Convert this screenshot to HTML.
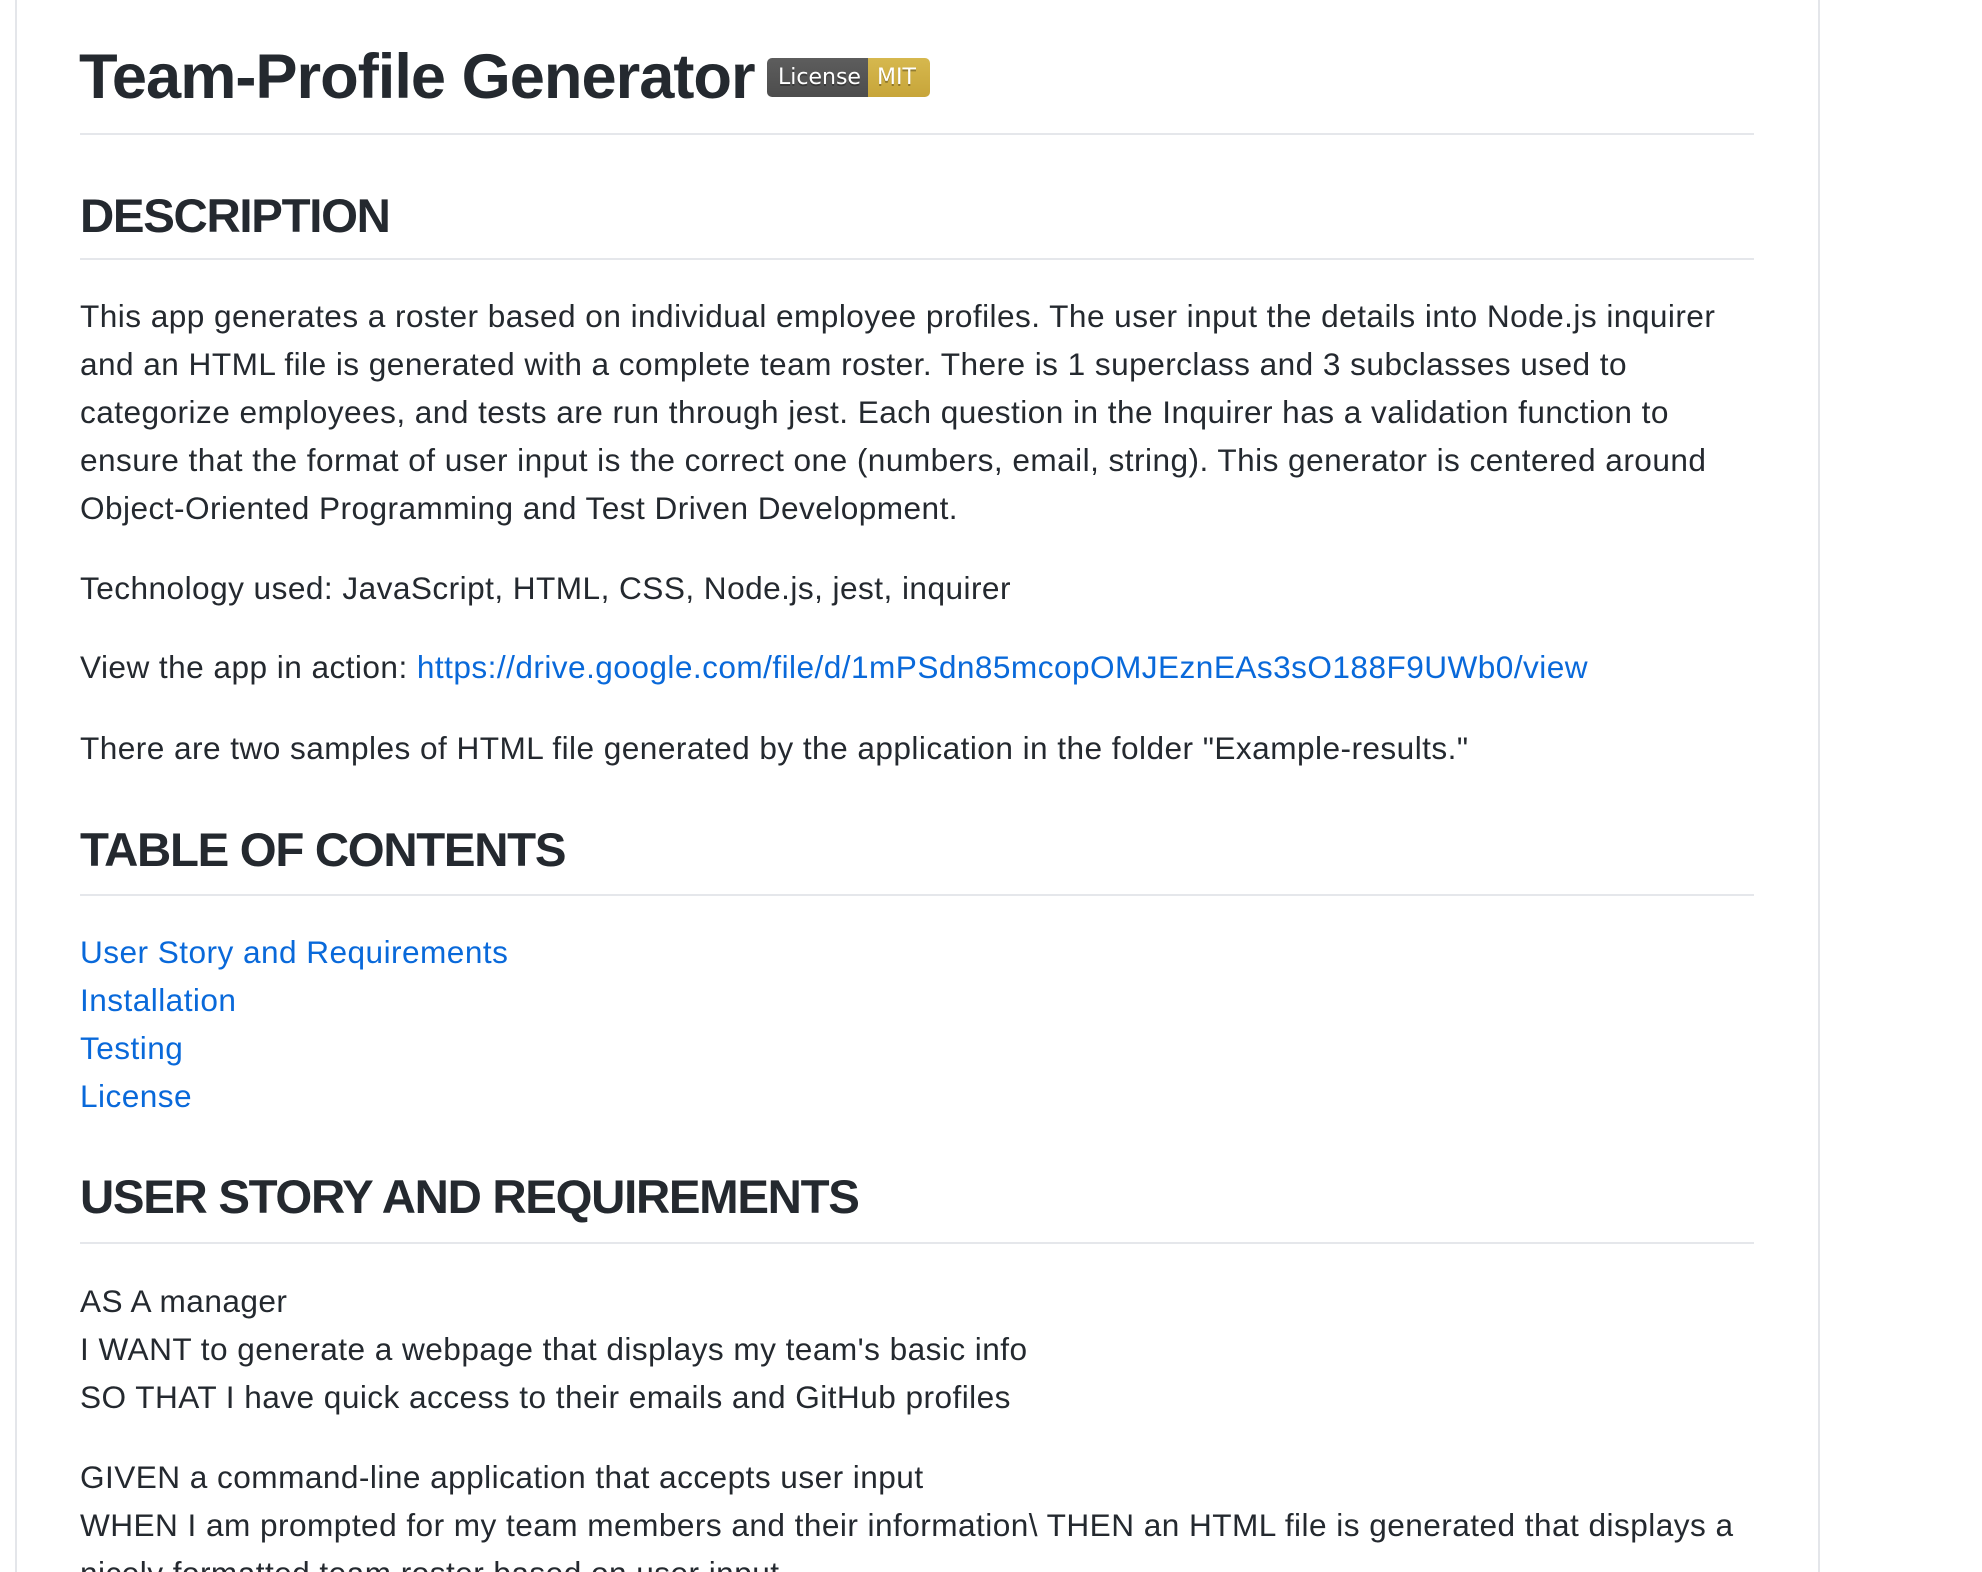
<!DOCTYPE html>
<html><head><meta charset="utf-8"><style>
html,body{margin:0;padding:0;background:#fff;width:1982px;height:1572px;overflow:hidden;position:relative;font-family:"Liberation Sans",Arial,sans-serif;color:#24292f}
.bl{position:absolute;left:15px;top:0;width:2px;height:1572px;background:#e4e6ea}
.br{position:absolute;left:1818px;top:0;width:2px;height:1572px;background:#e4e6ea}
.l{position:absolute;left:80px;white-space:nowrap;font-size:31.6px;line-height:47px;letter-spacing:0.45px}
.h2{position:absolute;left:80px;white-space:nowrap;font-size:47.4px;line-height:60px;font-weight:bold;letter-spacing:-1.3px}
.hr{position:absolute;left:80px;width:1674px;height:2px;background:#e5e7eb}
a{color:#0969da;text-decoration:none}
.badge{position:absolute;left:767px;top:58px;height:39px;border-radius:5px;overflow:hidden;display:flex;font-family:"DejaVu Sans",Verdana,sans-serif;font-size:22px;color:#fff;line-height:39px;text-shadow:0 2px 0 rgba(0,0,0,.3)}
</style></head><body>
<div class="bl"></div><div class="br"></div>
<div style="position:absolute;left:79px;top:37px;font-size:63.2px;line-height:80px;font-weight:bold;white-space:nowrap;letter-spacing:-1px">Team-Profile Generator</div>
<div class="badge"><span style="background:linear-gradient(#5d5d5d,#4d4d4d);padding:0 9px 0 11px;width:81px">License</span><span style="background:linear-gradient(#d6b84e,#c7a53a);padding:0 9px;width:44px">MIT</span></div>
<div class="hr" style="top:133px"></div>
<div class="h2" style="top:187px">DESCRIPTION</div>
<div class="hr" style="top:258px"></div>
<div class="l" style="top:293px">This app generates a roster based on individual employee profiles. The user input the details into Node.js inquirer</div>
<div class="l" style="top:341px">and an HTML file is generated with a complete team roster. There is 1 superclass and 3 subclasses used to</div>
<div class="l" style="top:389px">categorize employees, and tests are run through jest. Each question in the Inquirer has a validation function to</div>
<div class="l" style="top:437px">ensure that the format of user input is the correct one (numbers, email, string). This generator is centered around</div>
<div class="l" style="top:485px">Object-Oriented Programming and Test Driven Development.</div>
<div class="l" style="top:565px">Technology used: JavaScript, HTML, CSS, Node.js, jest, inquirer</div>
<div class="l" style="top:644px">View the app in action: <a>https://drive.google.com/file/d/1mPSdn85mcopOMJEznEAs3sO188F9UWb0/view</a></div>
<div class="l" style="top:725px">There are two samples of HTML file generated by the application in the folder "Example-results."</div>
<div class="h2" style="top:821px">TABLE OF CONTENTS</div>
<div class="hr" style="top:894px"></div>
<div class="l" style="top:929px"><a>User Story and Requirements</a></div>
<div class="l" style="top:977px"><a>Installation</a></div>
<div class="l" style="top:1025px"><a>Testing</a></div>
<div class="l" style="top:1073px"><a>License</a></div>
<div class="h2" style="top:1168px">USER STORY AND REQUIREMENTS</div>
<div class="hr" style="top:1242px"></div>
<div class="l" style="top:1278px">AS A manager</div>
<div class="l" style="top:1326px">I WANT to generate a webpage that displays my team's basic info</div>
<div class="l" style="top:1374px">SO THAT I have quick access to their emails and GitHub profiles</div>
<div class="l" style="top:1454px">GIVEN a command-line application that accepts user input</div>
<div class="l" style="top:1502px">WHEN I am prompted for my team members and their information\ THEN an HTML file is generated that displays a</div>
<div class="l" style="top:1550px">nicely formatted team roster based on user input</div>
</body></html>
